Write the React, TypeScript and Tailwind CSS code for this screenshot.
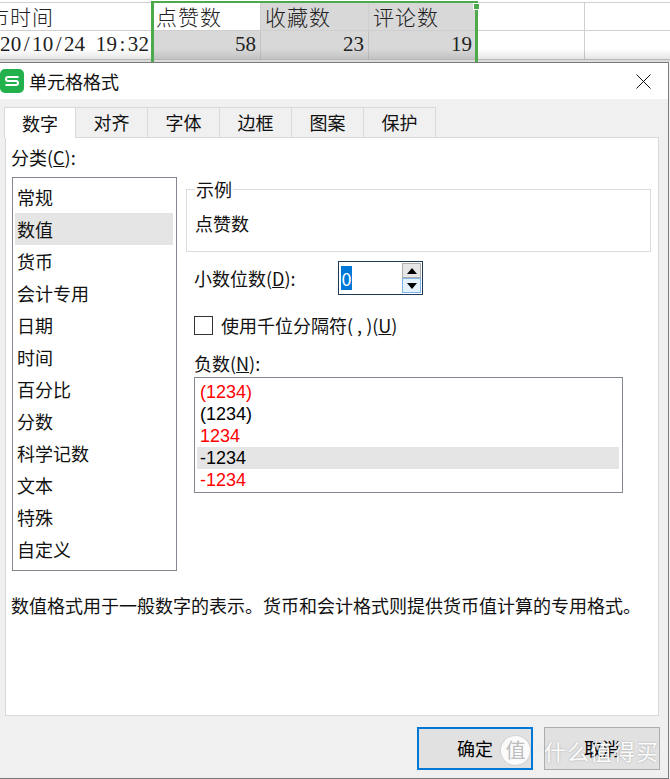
const cjk = "font-['Noto_Sans_CJK_SC','Liberation_Sans',sans-serif]";

const tabs = ['数字', '对齐', '字体', '边框', '图案', '保护'];
const categories = ['常规', '数值', '货币', '会计专用', '日期', '时间', '百分比', '分数', '科学记数', '文本', '特殊', '自定义'];
const negatives = [
  { label: '(1234)', red: true },
  { label: '(1234)', red: false },
  { label: '1234', red: true },
  { label: '-1234', red: false, selected: true },
  { label: '-1234', red: true },
];

function Sheet() {
  const head = "h-[28px] flex items-center pl-[4px] text-[21px] tracking-[1px] text-[#222] font-light border-r border-b border-[#cfcfcf]";
  const num = "h-[28px] flex items-center justify-end pr-[4px] text-[21px] text-[#222] font-['Liberation_Serif',serif] border-r border-[#c4c4c4] bg-[#d8d8d8]";
  return (
    <div className="relative h-[62px] bg-white overflow-hidden">
      <div className="mt-[2px] border-t border-[#cfcfcf] grid grid-cols-[152px_109px_108px_108px_108px_85px]">
        <div className="h-[28px] flex items-center text-[21px] tracking-[1px] text-[#222] font-light border-r border-b border-[#cfcfcf] overflow-hidden whitespace-nowrap">
          <span className="-ml-[12px]">市时间</span>
        </div>
        <div className={`${head} bg-white`}>点赞数</div>
        <div className={`${head} bg-[#d8d8d8]`}>收藏数</div>
        <div className={`${head} bg-[#d8d8d8]`}>评论数</div>
        <div className="border-r border-b border-[#cfcfcf]" />
        <div className="border-b border-[#cfcfcf]" />
        <div className="h-[28px] flex items-center justify-end pr-[2px] text-[21px] whitespace-nowrap overflow-hidden text-[#222] font-['Liberation_Serif',serif] border-r border-[#cfcfcf]">
          {'20/10/24 19:32'.split('').map((ch, i) => (
            <span key={i} className="w-[10.65px] shrink-0 text-center">{ch}</span>
          ))}
        </div>
        <div className={num}>58</div>
        <div className={num}>23</div>
        <div className={num}>19</div>
        <div className="border-r border-[#cfcfcf]" />
        <div />
      </div>
      <div className="border-t border-[#b5b5b5] h-[3px] bg-[#dcdcdc]" />
      <div className="absolute left-0 right-0 top-[49px] h-[10px] bg-gradient-to-b from-transparent to-black/10" />
      {/* green selection frame */}
      <div className="absolute left-[151px] top-[1px] w-[327px] h-[61px] border-[3px] border-t-[2px] border-b-0 border-[#4caa4a]" />
      <div className="absolute left-[473px] top-[3px] w-[7px] h-[7px] bg-[#4caa4a] border border-white" />
    </div>
  );
}

function Dialog() {
  return (
    <div className="flex flex-col h-[717px] mr-[1px] border-t border-r border-b border-[#7a7a7a] bg-[#f0f0f0]">
      <div className="h-[36px] bg-white flex items-center">
        <svg width="24" height="24" viewBox="0 0 24 24">
          <rect x="0" y="0" width="24" height="24" rx="5" fill="#22b14c" />
          <path d="M18.500 8H8a2 2 0 0 0 0 4h8a2 2 0 0 1 0 4H5.500" fill="none" stroke="#fff" strokeWidth="2" />
        </svg>
        <span className="ml-[5px] text-[18px] leading-none text-[#111]">单元格格式</span>
        <svg className="ml-auto mr-[17px]" width="15" height="15" viewBox="0 0 15 15">
          <path d="M0.500 0.500L14.500 14.500M14.500 0.500L0.500 14.500" stroke="#111" strokeWidth="1" fill="none" />
        </svg>
      </div>
      <div className="flex flex-col flex-1 px-[5px] pt-[8px]">
        <div className="flex h-[30px] items-end">
          {tabs.map((tab, i) => (
            <div
              key={tab}
              className={i === 0
                ? "w-[72px] h-[31px] -ml-[1px] -mb-[1px] relative bg-white border border-b-0 border-[#d9d9d9] flex items-center justify-center text-[18px] text-[#111]"
                : "w-[72px] h-[30px] border-t border-r border-[#d9d9d9] flex items-center justify-center text-[18px] text-[#111]"}
            >
              {tab}
            </div>
          ))}
        </div>
        <div className="h-[579px] bg-white border border-[#d9d9d9] mr-[4px] pt-[6px] pl-[6px] text-[18px] text-[#111]">
          <div className="h-[26px] leading-[26px] -ml-[1px]">分类(<span className="underline">C</span>):</div>
          <div className="flex mt-[7px]">
            <div className="w-[165px] h-[394px] border border-[#828790] pt-[3px] pl-[2px] pr-[3px]">
              {categories.map((c, i) => (
                <div key={c} className={`h-[32px] leading-[32px] pl-[2px] ${i === 1 ? 'bg-[#e5e5e5]' : ''}`}>{c}</div>
              ))}
            </div>
            <div className="ml-[9px] flex-1">
              <fieldset className="w-[465px] h-[73px] mt-[2px] border border-[#dcdcdc] pl-[8px]">
                <legend className="px-[1px] text-[18px] leading-[20px]">示例</legend>
                <div className="mt-[11px] leading-[26px]">点赞数</div>
              </fieldset>
              <div className="flex items-center mt-[9px] pl-[8px]">
                <span className="w-[144px]">小数位数(<span className="underline">D</span>):</span>
                <div className="w-[85px] h-[34px] border border-[#1f3a52] flex p-[1px] pl-[2px] items-center">
                  <span className="bg-[#0078d7] text-white h-[24px] leading-[24px] w-[11px] flex items-center justify-center">0</span>
                  <div className="ml-auto w-[19px] h-full flex flex-col">
                    <div className="flex-1 bg-[#e6e6e6] border border-[#adadad] flex items-center justify-center">
                      <div className="w-0 h-0 border-x-[5px] border-x-transparent border-b-[6px] border-b-black" />
                    </div>
                    <div className="flex-1 bg-[#e5f1fb] border border-[#7eb4ea] flex items-center justify-center">
                      <div className="w-0 h-0 border-x-[5px] border-x-transparent border-t-[6px] border-t-black" />
                    </div>
                  </div>
                </div>
              </div>
              <div className="flex items-center mt-[17px] pl-[8px] h-[26px]">
                <div className="w-[19px] h-[19px] border border-[#333]" />
                <span className="ml-[8px]">使用千位分隔符( , )(<span className="underline">U</span>)</span>
              </div>
              <div className="mt-[12px] pl-[8px] leading-[26px]">负数(<span className="underline">N</span>):</div>
              <div className="ml-[8px] mt-[1px] w-[429px] h-[116px] border border-[#828790] pt-[3px] px-[2px] font-['Liberation_Sans',sans-serif] text-[18px]">
                {negatives.map((n, i) => (
                  <div key={i} className={`h-[22px] leading-[22px] pl-[3px] mr-[1px] ${n.red ? 'text-[#ff0000]' : 'text-black'} ${n.selected ? 'bg-[#e5e5e5]' : ''}`}>{n.label}</div>
                ))}
              </div>
            </div>
          </div>
          <p className="mt-[21px] -ml-[1px] leading-[26px] whitespace-nowrap">数值格式用于一般数字的表示。货币和会计格式则提供货币值计算的专用格式。</p>
        </div>
        <div className="flex justify-end mt-[11px] mr-[3px] gap-[11px]">
          <div className="w-[116px] h-[43px] bg-[#e1e1e1] border-[2px] border-[#0078d7] flex items-center justify-center text-[18px] text-black">确定</div>
          <div className="w-[116px] h-[43px] bg-[#e1e1e1] border border-[#adadad] flex items-center justify-center text-[18px] text-black">取消</div>
        </div>
      </div>
    </div>
  );
}

export default function App() {
  return (
    <div className={`relative w-[670px] h-[779px] overflow-hidden bg-[#f4f4f4] ${cjk}`}>
      <Sheet />
      <Dialog />
      {/* site watermark */}
      <div className="absolute left-[501px] top-[735px] flex items-center text-white">
        <div className="w-[29px] h-[29px] rounded-full bg-white/85 flex items-center justify-center text-[20px] leading-none text-[#bdbdbd] shadow-[0_0_2px_rgba(0,0,0,0.2)]">值</div>
        <span className="ml-[14px] text-[22px] leading-[30px] tracking-[1px] opacity-90 [text-shadow:0_0_2px_rgba(0,0,0,0.3)]">什么值得买</span>
      </div>
    </div>
  );
}
